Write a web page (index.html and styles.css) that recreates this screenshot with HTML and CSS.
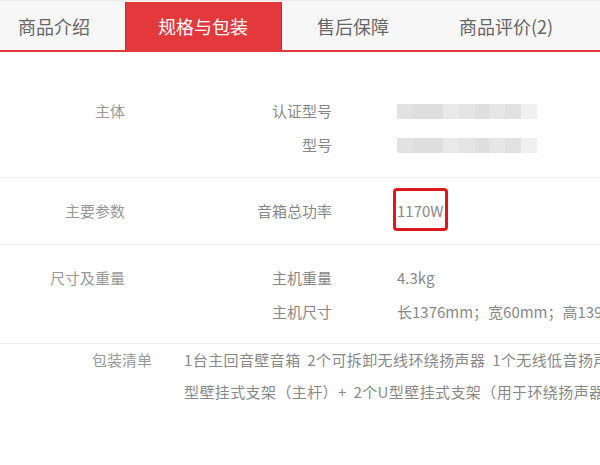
FILE: index.html
```html
<!DOCTYPE html>
<html lang="zh-CN">
<head>
<meta charset="utf-8">
<title>规格与包装</title>
<link rel="stylesheet" href="styles.css">
</head>
<body>
<div class="page">
  <div class="tabs">
    <div class="tab tab-first">商品介绍</div>
    <div class="tab active">规格与包装</div>
    <div class="tab">售后保障</div>
    <div class="tab">商品评价(2)</div>
  </div>

  <div class="sec sec-first">
    <div class="label">主体</div>
    <div class="kvs">
      <div class="kv"><div class="k">认证型号</div><div class="v"><span class="blur"></span></div></div>
      <div class="kv"><div class="k">型号</div><div class="v"><span class="blur"></span></div></div>
    </div>
  </div>

  <div class="sec">
    <div class="label">主要参数</div>
    <div class="kvs">
      <div class="kv"><div class="k">音箱总功率</div><div class="v"><span class="hl">1170W</span></div></div>
    </div>
  </div>

  <div class="sec sec-third">
    <div class="label">尺寸及重量</div>
    <div class="kvs">
      <div class="kv"><div class="k">主机重量</div><div class="v">4.3kg</div></div>
      <div class="kv"><div class="k">主机尺寸</div><div class="v">长1376mm；宽60mm；高139mm</div></div>
    </div>
  </div>

  <div class="sec sec-pack">
    <div class="label label-pack">包装清单</div>
    <div class="pack">
      <div class="line">1台主回音壁音箱 2个可拆卸无线环绕扬声器 1个无线低音扬声器 1个遥控器 1个L</div>
      <div class="line">型壁挂式支架（主杆）+ 2个U型壁挂式支架（用于环绕扬声器）</div>
    </div>
  </div>
</div>
</body>
</html>
```
FILE: styles.css
```css
html, body {
  margin: 0;
  padding: 0;
  background: #fff;
}
body {
  width: 600px;
  height: 465px;
  overflow: hidden;
  font-family: "Noto Sans CJK SC", "Microsoft YaHei", sans-serif;
}
.page {
  width: 600px;
}
.tabs {
  display: flex;
  height: 48px;
  padding-top: 1px;
  border-top: 1px solid #ececec;
  background: #f7f7f7;
  border-bottom: 2px solid #e4393c;
  overflow: hidden;
  white-space: nowrap;
}
.tab {
  padding: 0 35px;
  font-size: 18px;
  line-height: 48px;
  color: #666;
}
.tab-first {
  margin-left: -17px;
}
.tab.active {
  padding: 0 33px 0 32px;
  background: #e4393c;
  color: #fff;
  border-left: 1px solid #c8282b;
  border-right: 1px solid #c8282b;
}
.sec {
  display: flex;
  align-items: flex-start;
  padding: 16px 0 16px;
  border-bottom: 1px solid #eeeeee;
  font-size: 15px;
  line-height: 34px;
  white-space: nowrap;
}
.sec-first {
  padding: 42px 0 15px;
}
.sec-third {
  padding: 16px 0 14px;
}
.sec-pack {
  padding: 0;
  border-bottom: none;
  line-height: 32px;
}
.label {
  width: 125px;
  flex: none;
  text-align: right;
  color: #999;
}
.label-pack {
  width: 152px;
}
.kvs {
  display: flex;
  flex-direction: column;
}
.kv {
  display: flex;
}
.k {
  width: 207px;
  flex: none;
  text-align: right;
  color: #888;
}
.v {
  margin-left: 65px;
  color: #888;
}
.blur {
  display: inline-block;
  width: 140px;
  height: 15px;
  vertical-align: middle;
  margin-top: -3px;
  background: linear-gradient(90deg,
    #e2e2e2 0, #e2e2e2 16px,
    #dedede 16px, #dedede 46px,
    #e9e9e9 46px, #e9e9e9 62px,
    #e4e4e4 62px, #e4e4e4 78px,
    #dfdfdf 78px, #dfdfdf 92px,
    #e6e6e6 92px, #e6e6e6 108px,
    #e1e1e1 108px, #e1e1e1 124px,
    #f0f0f0 124px, #f0f0f0 140px);
}
.hl {
  position: relative;
  display: inline-block;
}
.hl::after {
  content: "";
  position: absolute;
  left: -4px;
  top: -6px;
  width: 55px;
  height: 43px;
  box-sizing: border-box;
  border: 3px solid #e0181b;
  border-radius: 4px;
}
.pack {
  margin-left: 32px;
  color: #888;
}
.line {
  white-space: nowrap;
  letter-spacing: 0.4px;
  word-spacing: 3px;
}
```
